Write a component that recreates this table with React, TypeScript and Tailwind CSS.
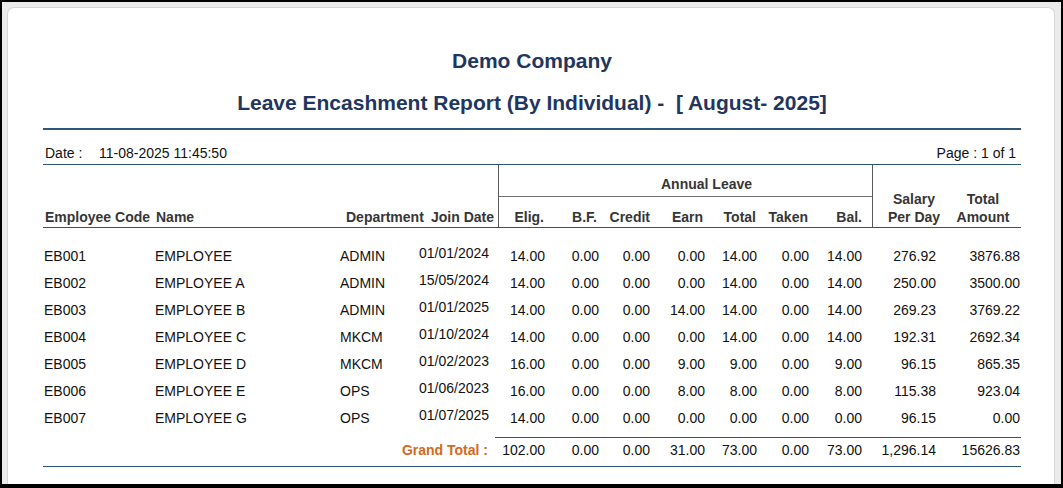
import React from "react";

type Row = {
  code: string;
  name: string;
  dept: string;
  join: string;
  v: string[];
};

const rows: Row[] = [
  { code: "EB001", name: "EMPLOYEE", dept: "ADMIN", join: "01/01/2024", v: ["14.00", "0.00", "0.00", "0.00", "14.00", "0.00", "14.00", "276.92", "3876.88"] },
  { code: "EB002", name: "EMPLOYEE A", dept: "ADMIN", join: "15/05/2024", v: ["14.00", "0.00", "0.00", "0.00", "14.00", "0.00", "14.00", "250.00", "3500.00"] },
  { code: "EB003", name: "EMPLOYEE B", dept: "ADMIN", join: "01/01/2025", v: ["14.00", "0.00", "0.00", "14.00", "14.00", "0.00", "14.00", "269.23", "3769.22"] },
  { code: "EB004", name: "EMPLOYEE C", dept: "MKCM", join: "01/10/2024", v: ["14.00", "0.00", "0.00", "0.00", "14.00", "0.00", "14.00", "192.31", "2692.34"] },
  { code: "EB005", name: "EMPLOYEE D", dept: "MKCM", join: "01/02/2023", v: ["16.00", "0.00", "0.00", "9.00", "9.00", "0.00", "9.00", "96.15", "865.35"] },
  { code: "EB006", name: "EMPLOYEE E", dept: "OPS", join: "01/06/2023", v: ["16.00", "0.00", "0.00", "8.00", "8.00", "0.00", "8.00", "115.38", "923.04"] },
  { code: "EB007", name: "EMPLOYEE G", dept: "OPS", join: "01/07/2025", v: ["14.00", "0.00", "0.00", "0.00", "0.00", "0.00", "0.00", "96.15", "0.00"] },
];

const totals = ["102.00", "0.00", "0.00", "31.00", "73.00", "0.00", "73.00", "1,296.14", "15626.83"];

// numeric column classes (width + right padding)
const numCols = [
  "w-[50px] pr-[3px]",
  "w-[53px] pr-[2px]",
  "w-[52px] pr-[3px]",
  "w-[54px] pr-[2px]",
  "w-[52px] pr-[2px]",
  "w-[52px] pr-[2px]",
  "w-[62px] pr-[11px]",
  "w-[65px] pr-[2px]",
  "w-[83px] pr-[1px]",
];

const headCols = [
  "w-[49px] pr-[4px]",
  "w-[53px] pr-[4px]",
  "w-[52px] pr-[3px]",
  "w-[54px] pr-[4px]",
  "w-[52px] pr-[3px]",
  "w-[52px] pr-[3px]",
  "w-[62px] pr-[11px]",
];

const NumCells = ({ v }: { v: string[] }) => (
  <>
    {v.map((x, i) => (
      <div key={i} className={`${numCols[i]} shrink-0 text-right whitespace-nowrap`}>
        {x}
      </div>
    ))}
  </>
);

export default function App() {
  return (
    <div
      className="w-[1063px] h-[488px] bg-black pt-[2px] pl-[2px] pr-[2px] pb-[4px] overflow-hidden"
      style={{ fontFamily: '"Liberation Sans", Arial, sans-serif' }}
    >
      <div className="h-full bg-[#ebebeb] pl-[5px] pt-[5px] pr-[6px]">
        <div className="h-full bg-white rounded-t-[7px] border border-b-0 border-[#d6d6d6] pl-[35px]">
          <div className="w-[978px]">
            {/* Titles */}
            <div className="mt-[41px] h-[24px] leading-[24px] text-center text-[21px] font-bold text-[#1f3660]">
              Demo Company
            </div>
            <div className="mt-[18px] h-[24px] leading-[24px] text-center text-[21px] font-bold text-[#1f3660] whitespace-pre">
              {"Leave Encashment Report (By Individual) -  [ August- 2025]"}
            </div>
            <div className="mt-[13px] h-[2px] bg-[#2f5676]" />

            {/* Date row */}
            <div className="h-[35px] pt-[12px] flex items-center text-[14px] text-[#111] border-b border-[#2f5676]">
              <div className="pl-[2px] w-[56px]">Date :</div>
              <div>11-08-2025 11:45:50</div>
              <div className="ml-auto pr-[5px]">Page : 1 of 1</div>
            </div>

            {/* Header */}
            <div className="flex h-[63px] border-b border-[#2f5676] text-[14px] font-bold text-[#363636] leading-[18px]">
              <div className="w-[109px] shrink-0 pl-[2px] flex items-end pb-[1px] whitespace-nowrap">Employee Code</div>
              <div className="w-[186px] shrink-0 pl-[4px] flex items-end pb-[1px]">Name</div>
              <div className="w-[80px] shrink-0 pl-[8px] flex items-end pb-[1px] whitespace-nowrap">Department</div>
              <div className="w-[80px] shrink-0 pl-[13px] flex items-end pb-[1px] whitespace-nowrap">Join Date</div>
              <div className="w-[375px] shrink-0 border-l border-r border-[#5a5a5a] flex flex-col">
                <div className="h-[32px] border-b border-[#707070] flex items-center pt-[7px] pl-[162px] whitespace-nowrap">
                  Annual Leave
                </div>
                <div className="flex-1 flex items-end pb-[1px]">
                  {["Elig.", "B.F.", "Credit", "Earn", "Total", "Taken", "Bal."].map((h, i) => (
                    <div key={h} className={`${headCols[i]} shrink-0 text-right whitespace-nowrap`}>
                      {h}
                    </div>
                  ))}
                </div>
              </div>
              <div className="w-[64px] shrink-0 pl-[18px] flex flex-col justify-end items-center pb-[1px] whitespace-nowrap text-center">
                <div>Salary</div>
                <div>Per Day</div>
              </div>
              <div className="w-[83px] shrink-0 pl-[9px] flex flex-col justify-end items-center pb-[1px] whitespace-nowrap text-center">
                <div>Total</div>
                <div>Amount</div>
              </div>
            </div>

            {/* Data rows */}
            <div className="pt-[14px] text-[14px] text-[#111]">
              {rows.map((r) => (
                <div key={r.code} className="flex items-center h-[27px] leading-[18px]">
                  <div className="w-[109px] shrink-0 pl-[1px]">{r.code}</div>
                  <div className="w-[186px] shrink-0 pl-[3px] whitespace-nowrap">{r.name}</div>
                  <div className="w-[80px] shrink-0 pl-[2px]">{r.dept}</div>
                  <div className="w-[80px] shrink-0 pl-[1px] mb-[5px]">{r.join}</div>
                  <NumCells v={r.v} />
                </div>
              ))}
            </div>

            {/* Grand total */}
            <div className="mt-[6px] ml-[452px] h-px bg-[#2f5676]" />
            <div className="flex items-center h-[24px] text-[14px] text-[#111]">
              <div className="w-[455px] shrink-0 pr-[10px] text-right font-bold text-[#d4691e] whitespace-nowrap">
                Grand Total :
              </div>
              <NumCells v={totals} />
            </div>
            <div className="mt-[4px] h-px bg-[#2f5676]" />
          </div>
        </div>
      </div>
    </div>
  );
}
